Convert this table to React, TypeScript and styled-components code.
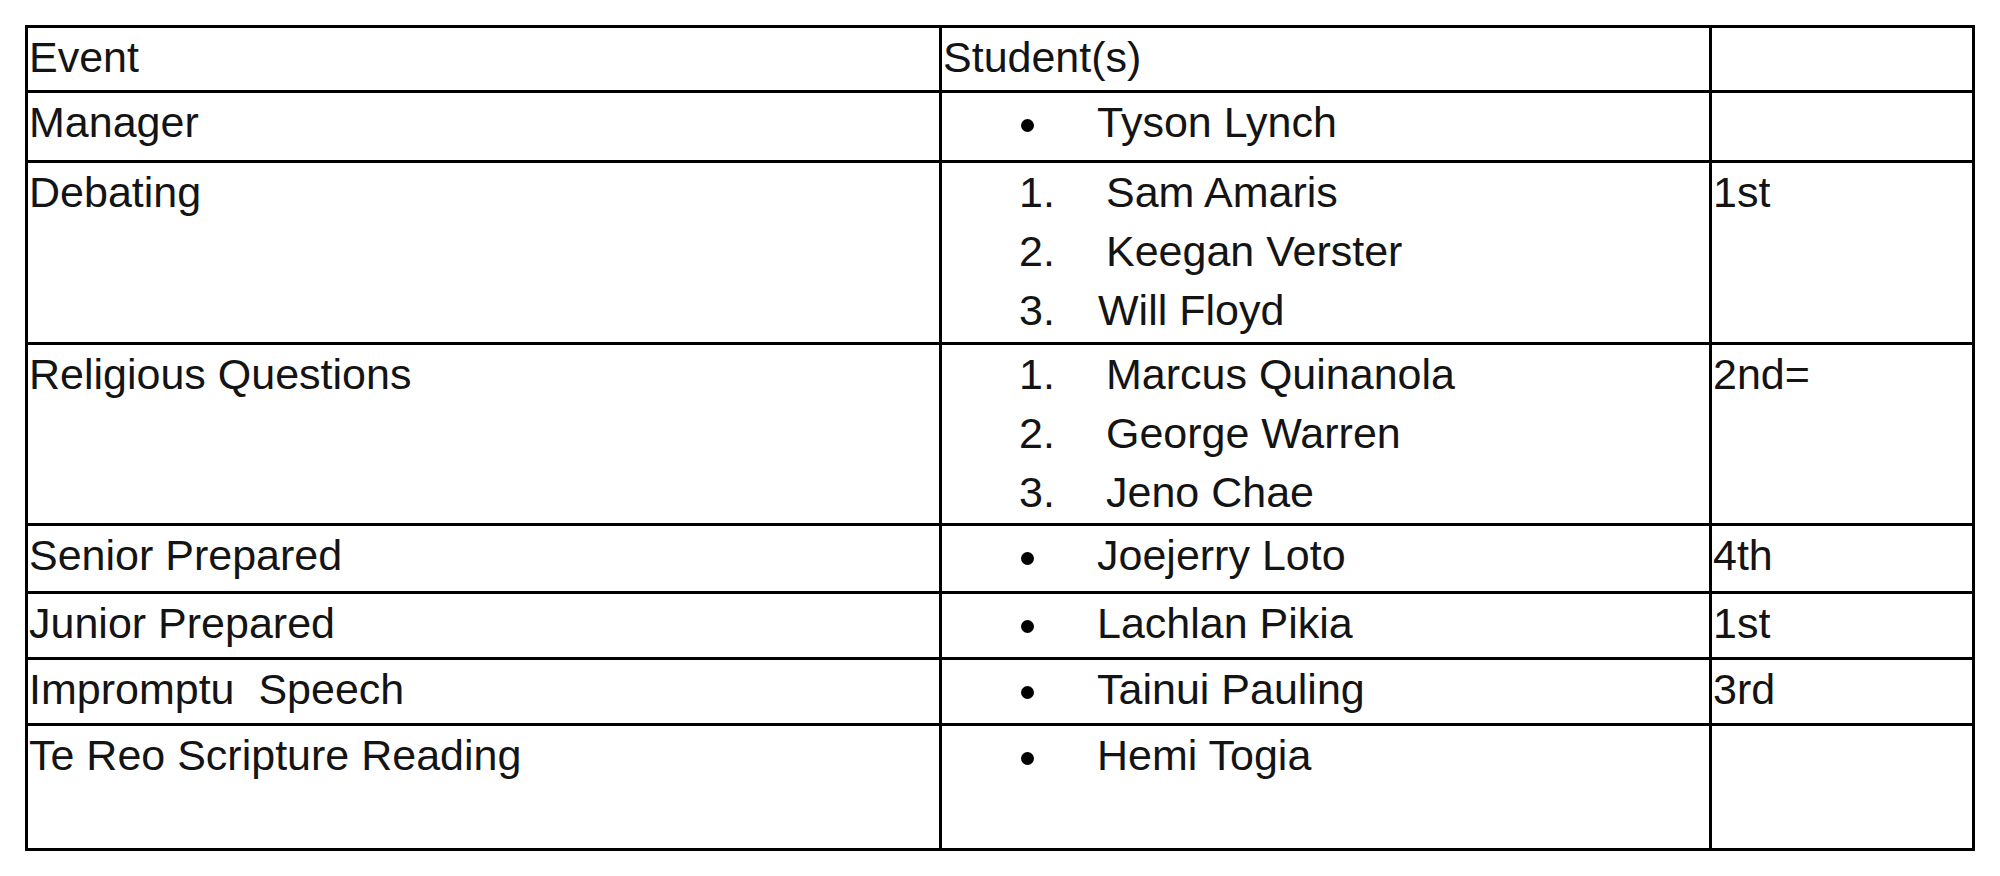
import React from 'react';
import styled, { createGlobalStyle } from 'styled-components';

type Name = { name: string; tight?: boolean };
type Students = { kind: 'bullet' | 'number'; names: Name[] };
type Row = { event: string; students?: Students; place?: string; height: number };

const rows: Row[] = [
  { event: 'Manager', students: { kind: 'bullet', names: [{ name: 'Tyson Lynch' }] }, height: 70 },
  {
    event: 'Debating',
    students: {
      kind: 'number',
      names: [{ name: 'Sam Amaris' }, { name: 'Keegan Verster' }, { name: 'Will Floyd', tight: true }]
    },
    place: '1st',
    height: 182
  },
  {
    event: 'Religious Questions',
    students: {
      kind: 'number',
      names: [{ name: 'Marcus Quinanola' }, { name: 'George Warren' }, { name: 'Jeno Chae' }]
    },
    place: '2nd=',
    height: 181
  },
  { event: 'Senior Prepared', students: { kind: 'bullet', names: [{ name: 'Joejerry Loto' }] }, place: '4th', height: 68 },
  { event: 'Junior Prepared', students: { kind: 'bullet', names: [{ name: 'Lachlan Pikia' }] }, place: '1st', height: 66 },
  { event: 'Impromptu  Speech', students: { kind: 'bullet', names: [{ name: 'Tainui Pauling' }] }, place: '3rd', height: 66 },
  { event: 'Te Reo Scripture Reading', students: { kind: 'bullet', names: [{ name: 'Hemi Togia' }] }, height: 125 }
];

export default function App() {
  return (
    <>
      <GlobalStyle />
      <Page>
        <Table>
          <Cell $height={65}>Event</Cell>
          <Cell $height={65}>Student(s)</Cell>
          <Cell $height={65} />
          {rows.map((row) => (
            <React.Fragment key={row.event}>
              <Cell $height={row.height}>{row.event}</Cell>
              <Cell $height={row.height}>
                {row.students && (
                  <List>
                    {row.students.names.map((n, i) => (
                      <Item key={n.name}>
                        {row.students!.kind === 'bullet' ? (
                          <Marker $width={76} $offset={78}>
                            <Dot />
                          </Marker>
                        ) : (
                          <Marker $width={n.tight ? 79 : 87} $offset={76}>
                            {i + 1}.
                          </Marker>
                        )}
                        <span>{n.name}</span>
                      </Item>
                    ))}
                  </List>
                )}
              </Cell>
              <Cell $height={row.height}>{row.place}</Cell>
            </React.Fragment>
          ))}
        </Table>
      </Page>
    </>
  );
}

const GlobalStyle = createGlobalStyle`
  html, body {
    margin: 0;
    background: #fff;
  }
  * {
    box-sizing: border-box;
  }
`;

const Page = styled.div`
  padding: 25px;
  font-family: 'Liberation Sans', Arial, sans-serif;
  font-size: 43px;
  line-height: 59px;
  color: #141414;
`;

const Table = styled.div`
  display: grid;
  grid-template-columns: 914px 770px 263px;
  width: fit-content;
  border-top: 3px solid #000;
  border-left: 3px solid #000;
`;

interface CellProps {
  $height: number;
}
const Cell = styled.div<CellProps>`
  height: ${({ $height }) => $height}px;
  padding: 0 1px;
  border-right: 3px solid #000;
  border-bottom: 3px solid #000;
  white-space: pre;
`;

const List = styled.div`
  display: flex;
  flex-direction: column;
`;

const Item = styled.div`
  display: flex;
  align-items: baseline;
`;

interface MarkerProps {
  $width: number;
  $offset: number;
}
const Marker = styled.span<MarkerProps>`
  flex: 0 0 auto;
  width: ${({ $width }) => $width}px;
  margin-left: ${({ $offset }) => $offset}px;
`;

const Dot = styled.span`
  display: inline-block;
  width: 13px;
  height: 13px;
  border-radius: 50%;
  background: #000;
  vertical-align: middle;
`;
